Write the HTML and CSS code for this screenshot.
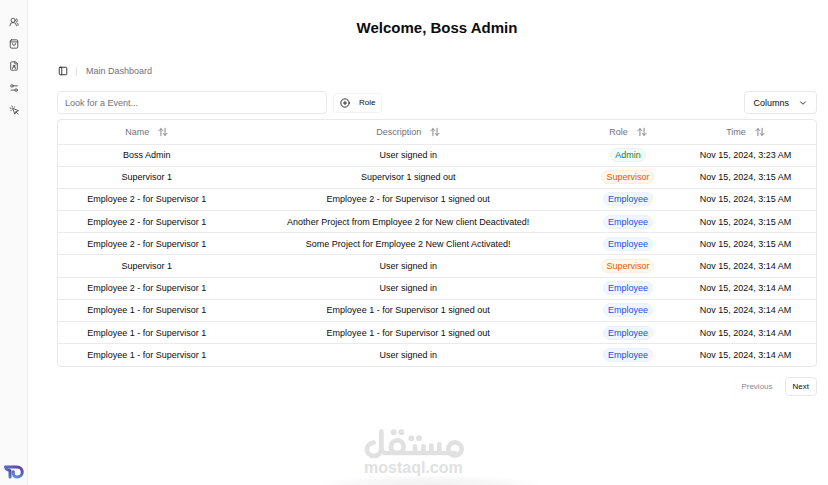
FILE: index.html
```html
<!DOCTYPE html>
<html lang="en">
<head>
<meta charset="utf-8">
<meta name="viewport" content="width=device-width, initial-scale=1">
<title>Main Dashboard</title>
<link rel="stylesheet" href="styles.css">
</head>
<body>
<svg class="sprite" aria-hidden="true">
  <symbol id="sort" viewBox="0 0 24 24"><path d="M7 21V4M2 9l5-5 5 5M17 3v17M12 15l5 5 5-5"/></symbol>
</svg>
<div class="app">
  <aside class="sidebar">
    <nav class="nav" aria-label="Main">
      <a href="#" aria-label="Users"><svg class="icon" viewBox="0 0 24 24"><path d="M18 21a8 8 0 0 0-16 0"/><circle cx="10" cy="8" r="5"/><path d="M22 20c0-3.4-2-6.5-4-8a5 5 0 0 0-.5-8.3"/></svg></a>
      <a href="#" aria-label="Projects"><svg class="icon" viewBox="0 0 24 24"><rect x="3" y="2" width="18" height="20" rx="3"/><path d="M3 7h18M16 11a4 4 0 0 1-8 0"/></svg></a>
      <a href="#" aria-label="Clients"><svg class="icon" viewBox="0 0 24 24"><path d="M15 2H6a2 2 0 0 0-2 2v16a2 2 0 0 0 2 2h12a2 2 0 0 0 2-2V7zM14 2v5h6"/><circle cx="12" cy="12" r="2"/><path d="M8 18a4 4 0 0 1 8 0"/></svg></a>
      <a href="#" aria-label="Settings"><svg class="icon" viewBox="0 0 24 24"><path d="M20 7h-9M14 17H5"/><circle cx="17" cy="17" r="3"/><circle cx="7" cy="7" r="3"/></svg></a>
      <a href="#" aria-label="Events"><svg class="icon" viewBox="0 0 24 24"><path d="M9 9l5 13 2.500-5.500L22 14zM7.200 2.200L8 5.100M5.100 8l-2.900-.8M14 4.100L12 6M6 12l-1.900 2M16.500 16.500L22 22"/></svg></a>
    </nav>
    <svg class="brand" viewBox="0 0 60 42" role="img" aria-label="Company logo">
      <defs><linearGradient id="brand-fill" x1="0" y1="1" x2="1" y2="0"><stop offset="0" stop-color="#7fb0ee"/><stop offset=".5" stop-color="#5570cb"/><stop offset="1" stop-color="#66389c"/></linearGradient></defs>
      <g fill="none" stroke="url(#brand-fill)" stroke-width="9"><path d="M4 6H38C60 6 60 35 40 36C30 37 27 29 28 20"/><path d="M6 11C10 17 15 13 18 17V36"/><path d="M39 17V26"/></g>
    </svg>
  </aside>

  <main class="main">
    <h1>Welcome, Boss Admin</h1>
    <div class="crumbs">
      <button class="toggle" type="button" aria-label="Toggle sidebar"><svg class="icon" viewBox="0 0 24 24"><rect x="3" y="3" width="18" height="18" rx="2"/><path d="M9 3v18"/></svg></button>
      <span class="divider"></span>
      <span>Main Dashboard</span>
    </div>
    <div class="toolbar">
      <input class="search" type="text" placeholder="Look for a Event..." aria-label="Look for a Event">
      <button class="btn role-filter" type="button"><svg class="icon" viewBox="0 0 24 24"><circle cx="12" cy="12" r="10"/><path d="M8 12h8M12 8v8"/></svg>Role</button>
      <button class="btn columns" type="button">Columns<svg class="chevron" viewBox="0 0 24 24"><path d="M6 9l6 6 6-6"/></svg></button>
    </div>
    <div class="table-box">
      <table>
        <colgroup><col class="c-name"><col class="c-desc"><col class="c-role"><col class="c-time"></colgroup>
        <thead><tr>
          <th><button type="button">Name<svg class="sort"><use href="#sort"/></svg></button></th>
          <th><button type="button">Description<svg class="sort"><use href="#sort"/></svg></button></th>
          <th><button type="button">Role<svg class="sort"><use href="#sort"/></svg></button></th>
          <th><button type="button">Time<svg class="sort"><use href="#sort"/></svg></button></th>
        </tr></thead>
        <tbody>
          <tr><td>Boss Admin</td><td>User signed in</td><td><span class="badge admin">Admin</span></td><td>Nov 15, 2024, 3:23 AM</td></tr>
          <tr><td>Supervisor 1</td><td>Supervisor 1 signed out</td><td><span class="badge supervisor">Supervisor</span></td><td>Nov 15, 2024, 3:15 AM</td></tr>
          <tr><td>Employee 2 - for Supervisor 1</td><td>Employee 2 - for Supervisor 1 signed out</td><td><span class="badge employee">Employee</span></td><td>Nov 15, 2024, 3:15 AM</td></tr>
          <tr><td>Employee 2 - for Supervisor 1</td><td>Another Project from Employee 2 for New client Deactivated!</td><td><span class="badge employee">Employee</span></td><td>Nov 15, 2024, 3:15 AM</td></tr>
          <tr><td>Employee 2 - for Supervisor 1</td><td>Some Project for Employee 2 New Client Activated!</td><td><span class="badge employee">Employee</span></td><td>Nov 15, 2024, 3:15 AM</td></tr>
          <tr><td>Supervisor 1</td><td>User signed in</td><td><span class="badge supervisor">Supervisor</span></td><td>Nov 15, 2024, 3:14 AM</td></tr>
          <tr><td>Employee 2 - for Supervisor 1</td><td>User signed in</td><td><span class="badge employee">Employee</span></td><td>Nov 15, 2024, 3:14 AM</td></tr>
          <tr><td>Employee 1 - for Supervisor 1</td><td>Employee 1 - for Supervisor 1 signed out</td><td><span class="badge employee">Employee</span></td><td>Nov 15, 2024, 3:14 AM</td></tr>
          <tr><td>Employee 1 - for Supervisor 1</td><td>Employee 1 - for Supervisor 1 signed out</td><td><span class="badge employee">Employee</span></td><td>Nov 15, 2024, 3:14 AM</td></tr>
          <tr><td>Employee 1 - for Supervisor 1</td><td>User signed in</td><td><span class="badge employee">Employee</span></td><td>Nov 15, 2024, 3:14 AM</td></tr>
        </tbody>
      </table>
    </div>
    <div class="pager">
      <button class="btn small" type="button" disabled>Previous</button>
      <button class="btn small" type="button">Next</button>
    </div>
  </main>
</div>
<div class="dock-shadow"></div>
<div class="watermark">
  <svg viewBox="130 38 300 94" role="img" aria-label="mostaql">
    <g fill="none" stroke="currentColor" stroke-width="14" stroke-linecap="round" stroke-linejoin="round">
      <path d="M182 48V98C182 113 173 122 160 122C146 122 139 112 139 102C139 92 147 83 159 82"/>
      <path d="M182 100C182 108 188 113 198 113H403"/>
      <circle cx="230" cy="94" r="19"/>
      <circle cx="403" cy="101" r="20"/>
      <path d="M283 93V112M308 93V112M332 91V112M356 87V112"/>
    </g>
    <g fill="currentColor"><circle cx="219" cy="51" r="9"/><circle cx="242" cy="51" r="9"/><circle cx="272" cy="69" r="9"/><circle cx="295" cy="69" r="9"/></g>
  </svg>
  <span>mostaql.com</span>
</div>
</body>
</html>
```
FILE: styles.css
```css
* { box-sizing: border-box; }
body {
  margin: 0;
  background: #fff;
  color: #0c0c0e;
  font: 9px/12px "Liberation Sans", Arial, sans-serif;
}
button, input { font: inherit; color: inherit; }
button { padding: 0; border: 0; background: none; }
a { color: inherit; }
svg { display: block; fill: none; stroke-linecap: round; stroke-linejoin: round; }
.sprite { position: absolute; width: 0; height: 0; }
.app { display: flex; min-height: 100vh; }
.sidebar {
  display: flex;
  flex-direction: column;
  justify-content: space-between;
  align-items: center;
  flex: 0 0 28px;
  padding: 17px 0 6px;
  border-right: 1px solid #ededef;
  background: #fafafa;
}
.nav { display: flex; flex-direction: column; gap: 12px; color: #3f3f46; }
.icon { width: 10px; height: 10px; stroke: currentColor; stroke-width: 2; }
.brand { width: 20px; height: 14px; }
.main { flex: 1; min-width: 0; padding: 18px 11px 18px 29px; }
h1 { margin: 0; font-size: 15px; line-height: 20px; text-align: center; }
.crumbs {
  display: flex;
  align-items: center;
  gap: 8px;
  margin-top: 27px;
  color: #71717a;
}
.toggle { color: #18181b; padding-left: 1px; }
.divider { width: 1px; height: 9px; margin-right: 1px; background: #e4e4e7; }
.toolbar { display: flex; align-items: center; gap: 6px; margin-top: 14px; }
.search {
  width: 270px;
  height: 23px;
  padding: 0 7px;
  border: 1px solid #e9e9eb;
  border-radius: 4px;
  background: #fff;
}
.search::placeholder { color: #71717a; opacity: 1; }
.btn {
  display: flex;
  align-items: center;
  justify-content: center;
  border: 1px solid #e9e9eb;
  border-radius: 4px;
  background: #fff;
}
.role-filter { gap: 9px; height: 20px; padding: 0 6px; font-size: 8px; border-color: #f3f3f5; }
.columns { gap: 9px; height: 23px; margin-left: auto; padding: 0 8px; }
.chevron { width: 10px; height: 10px; stroke: currentColor; stroke-width: 2; }
.table-box { margin-top: 5px; border: 1px solid #e9e9eb; border-radius: 4px; }
table { width: 100%; height: 246px; border-collapse: collapse; table-layout: fixed; text-align: center; }
.c-name { width: 23%; }
.c-desc { width: 46%; }
.c-role { width: 12%; }
.c-time { width: 19%; }
th, td { height: 22px; padding: 0 0 0 3px; border-bottom: 1px solid #ebebed; }
th { height: 24px; color: #71717a; font-weight: normal; }
tbody tr:last-child td { border-bottom: 0; }
th button { display: inline-flex; align-items: center; gap: 9px; }
.sort { width: 10px; height: 10px; stroke: currentColor; stroke-width: 2; }
.badge { display: inline-block; padding: 0 4px; border: 1px solid; border-radius: 8px; }
.admin { color: #15803d; background: #f0fdf4; border-color: #e8f3ef; }
.supervisor { color: #ea580c; background: #fff7e8; border-color: #fceedd; }
.employee { color: #1d4ed8; background: #eff6ff; border-color: #eaf3fd; }
.pager { display: flex; justify-content: flex-end; gap: 4px; margin-top: 10px; }
.small { height: 19px; padding: 0 7px; font-size: 8px; }
.small:disabled { color: #8b8b90; border-color: #fdfdfd; }
.watermark {
  position: absolute;
  bottom: 9px;
  left: 50%;
  display: flex;
  flex-direction: column;
  width: 100px;
  margin-left: -50px;
  color: #e1e1e1;
  font-size: 16px;
  line-height: 17px;
  font-weight: bold;
  pointer-events: none;
}
.dock-shadow {
  position: absolute;
  bottom: 0;
  left: 50%;
  width: 220px;
  height: 10px;
  margin-left: -95px;
  background: radial-gradient(ellipse at bottom, #f1f1f1 0%, #f7f7f7 45%, transparent 72%);
}
```
